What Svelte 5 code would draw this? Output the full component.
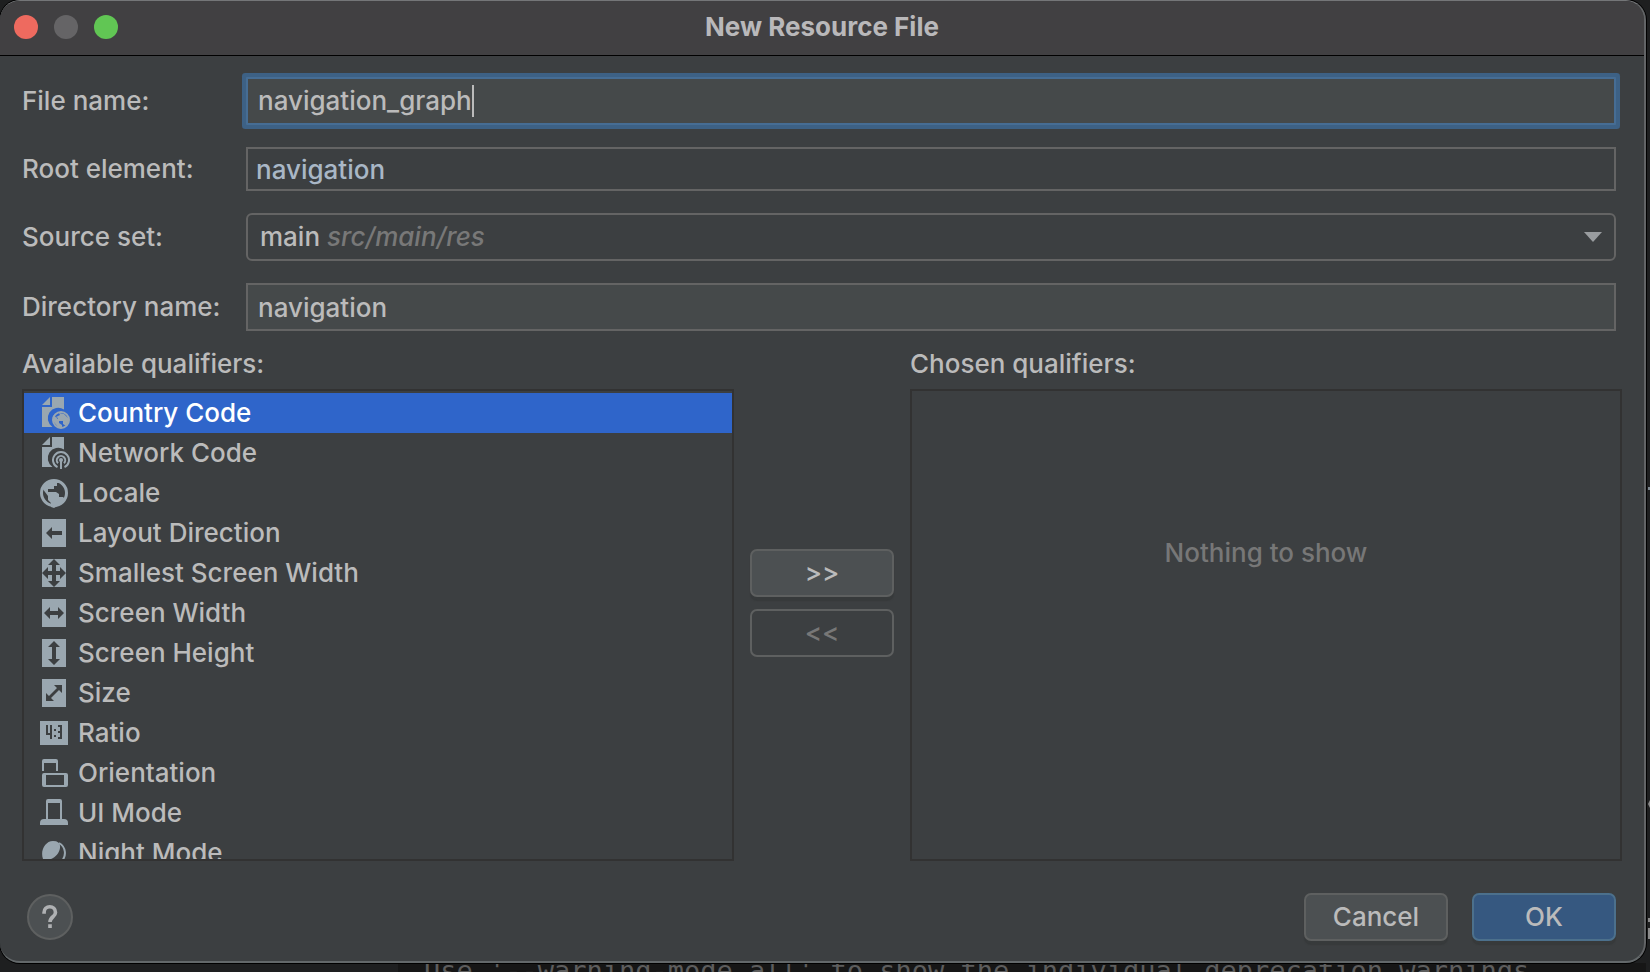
<script>
  const qualifiers = [
    ['country', 'Country Code'],
    ['network', 'Network Code'],
    ['locale', 'Locale'],
    ['direction', 'Layout Direction'],
    ['smallest', 'Smallest Screen Width'],
    ['width', 'Screen Width'],
    ['height', 'Screen Height'],
    ['size', 'Size'],
    ['ratio', 'Ratio'],
    ['orientation', 'Orientation'],
    ['uimode', 'UI Mode'],
    ['night', 'Night Mode']
  ];
  let selected = $state(0);
  let fileName = $state('navigation_graph');
  let rootElement = $state('navigation');
  let directory = $state('navigation');
</script>

{#snippet icon(kind)}
  <svg class="icon" viewBox="0 0 32 32" aria-hidden="true">
    {#if kind === 'country' || kind === 'network'}
      <path d="M12 0v8H4z M14 0h12v12.400A10.500 10.500 0 0 0 14.500 30H4V10h10z" />
    {/if}
    {#if kind === 'country'}
      <circle class="line" cx="23" cy="23" r="8" />
      <path d="M15.500 18l5.500 5v3l3 2v3l-4-1-5-6z M21 16l5 1 4 4 1 3-3 5-3-2v-3h-5v-3l-2-1 4-2z" />
    {:else if kind === 'network'}
      <path class="line" d="M19.500 30.200A8 8 0 1 1 26.500 30.200 M20 26.200A4.200 4.200 0 1 1 26 26.200" />
      <circle cx="23" cy="23" r="2" /><path d="M22 23h2v9h-2z" />
    {:else if kind === 'locale'}
      <circle class="line wide" cx="16" cy="16" r="12.500" />
      <path d="M12 3h9v3h-2v3h-3v3h-6v3h8l3 2v3h4l2 2-4 5-7 4-3-1v-4l-3-3v-4L4 11z" />
    {:else if kind === 'direction'}
      <path d="M4 2h24v28H4z" /><path class="cut" d="M8 16l6-6v4h10v4H14v4z" />
    {:else if kind === 'smallest'}
      <path d="M4 2h24v28H4z" />
      <path class="cut" d="M16 2l6 6h-4v6h4v-4l6 6-6 6v-4h-4v6h4l-6 6-6-6h4v-6h-4v4l-6-6 6-6v4h4V8h-4z" />
    {:else if kind === 'width'}
      <path d="M4 2h24v28H4z" /><path class="cut" d="M6 16l6-6v4h8v-4l6 6-6 6v-4h-8v4z" />
    {:else if kind === 'height'}
      <path d="M4 2h24v28H4z" /><path class="cut" d="M16 4l6 6h-4v12h4l-6 6-6-6h4V10h-4z" />
    {:else if kind === 'size'}
      <path d="M4 2h24v28H4z" />
      <path class="cut" d="M16 8h8v8l-3-3-8 8 3 3H8v-8l3 3 8-8z" />
    {:else if kind === 'ratio'}
      <path d="M2 4h28v24H2z" />
      <path class="cut" d="M8 8h2v8h2V8h2v14h-2v-4H8z M16 12h2v2h-2z M16 18h2v2h-2z M20 8h4v14h-4v-2h2v-4h-2v-2h2v-4h-2z" />
    {:else if kind === 'orientation'}
      <path d="M4 14V4q0-2 2-2h12q2 0 2 2v10h-2V6H6v8z" />
      <path fill-rule="evenodd" d="M6 16h22q2 0 2 2v10q0 2-2 2H6q-2 0-2-2V18q0-2 2-2zM8 18v10h18V18z" />
    {:else if kind === 'uimode'}
      <path fill-rule="evenodd" d="M8 22V4q0-2 2-2h12q2 0 2 2v18h2q4 0 4 4v2H2v-2q0-4 4-4zM10 6v16h12V6z" />
    {:else if kind === 'night'}
      <path d="M5 22C2 14 7 4 15 4q8 0 7 7c-1 8-10 14-17 11z" />
      <path class="line" d="M21 6c7 4 8 13 2 19q-7 5-14-1" />
    {/if}
  </svg>
{/snippet}

<div class="desktop">
  <main class="dialog" aria-labelledby="title">
    <header class="titlebar">
      <div class="lights">
        <button class="light close" aria-label="Close"></button>
        <button class="light minimize" aria-label="Minimize" disabled></button>
        <button class="light zoom" aria-label="Zoom"></button>
      </div>
      <h1 id="title">New Resource File</h1>
    </header>

    <form class="content" onsubmit={(e) => e.preventDefault()}>
      <div class="fields">
        <label for="file">File name:</label>
        <div class="field filled focused">
          <span class="grow"><span class="mirror" aria-hidden="true">{fileName}</span><input id="file" bind:value={fileName} /></span>
        </div>
        <label for="root">Root element:</label>
        <input id="root" class="field root" bind:value={rootElement} />
        <label for="source">Source set:</label>
        <div class="field combo">
          <select id="source"><option>main src/main/res</option></select>
          <span class="value" aria-hidden="true">main <i>src/main/res</i></span>
          <svg class="arrow" viewBox="0 0 18 10" aria-hidden="true"><path d="M0 0h18L9 10z" /></svg>
        </div>
        <label for="dir">Directory name:</label>
        <input id="dir" class="field filled" bind:value={directory} />
      </div>

      <div class="qualifiers">
        <section>
          <h2>Available qualifiers:</h2>
          <ul class="list" role="listbox" aria-label="Available qualifiers">
            {#each qualifiers as [kind, name], i}
              <li role="option" aria-selected={selected === i}>
                <button type="button" class="row" class:selected={selected === i} onclick={() => (selected = i)}>
                  {@render icon(kind)}<span>{name}</span>
                </button>
              </li>
            {/each}
          </ul>
        </section>
        <div class="transfer">
          <button type="button" class="button">&gt;&gt;</button>
          <button type="button" class="button" disabled>&lt;&lt;</button>
        </div>
        <section>
          <h2>Chosen qualifiers:</h2>
          <div class="list empty">Nothing to show</div>
        </section>
      </div>

      <footer>
        <button type="button" class="help" aria-label="Help">
          <svg viewBox="0 0 46 46" aria-hidden="true">
            <path class="hook" d="M16.500 19.500v-1.500a6 6 0 0 1 12.500 0c0 5-6 4.500-6 10.500" /><path d="M21 31h4v4h-4z" />
          </svg>
        </button>
        <div class="actions">
          <button type="button" class="button">Cancel</button>
          <button type="submit" class="button primary">OK</button>
        </div>
      </footer>
    </form>
  </main>
  <div class="console">Use '--warning-mode all' to show the individual deprecation warnings.</div>
  <svg class="edge" viewBox="0 0 2 460" aria-hidden="true">
    <path fill="#7d8790" d="M0 0h2v3H0z" />
    <path fill="#8a8a8a" d="M0 317l2-4v8z M0 431h2v4H0z M0 441h2v11H0z" />
  </svg>
</div>

<style>
  :global(body) {
    margin: 0;
    background: #1e1f20;
  }
  * {
    box-sizing: border-box;
  }
  .desktop {
    position: relative;
    height: 100vh;
    padding-right: 4px;
    display: flex;
    flex-direction: column;
    overflow: hidden;
    background: #1e1f20;
    color: #bbbbbb;
    font: 500 26px/32px Inter, "Liberation Sans", sans-serif;
  }
  button, input, select {
    font: inherit;
    color: inherit;
    margin: 0;
  }
  .dialog {
    position: relative;
    z-index: 1;
    flex: none;
    border: 1px solid #747678;
    border-width: 1px 2px 2px 0;
    border-color: #747678 #626466 #63686a;
    border-radius: 20px;
    background: #3c3f41;
    box-shadow: 0 0 0 1px #000;
    overflow: hidden;
  }
  .titlebar {
    display: grid;
    grid-template-columns: 1fr auto 1fr;
    align-items: center;
    height: 55px;
    padding: 0 14px 2px;
    background: #414042;
    border-bottom: 1px solid #000;
  }
  .lights {
    display: flex;
    gap: 16px;
  }
  .light {
    width: 24px;
    height: 24px;
    padding: 0;
    border: 0;
    border-radius: 50%;
  }
  .close { background: #ee6a5f; }
  .minimize { background: #656466; }
  .zoom { background: #61c654; }
  h1 {
    margin: 0;
    font-size: 26px;
    line-height: 32px;
    font-weight: 700;
    color: #b9b8ba;
  }
  .content {
    padding: 21px 22px 20px;
  }
  .fields {
    display: grid;
    grid-template-columns: 224px 1fr;
    align-items: center;
    row-gap: 22px;
    padding-right: 6px;
  }
  .field {
    width: 100%;
    height: 48px;
    padding: 0 10px;
    border: 2px solid #646464;
    background: transparent;
    outline: 0;
    border-radius: 0;
  }
  .filled { background: #45494a; }
  .focused {
    display: flex;
    align-items: center;
    border-color: #466d94;
    box-shadow: 0 0 0 4px #3d6185;
    border-radius: 1px;
  }
  .grow {
    display: inline-grid;
    max-width: 100%;
    border-right: 2px solid #bbbbbb;
  }
  .mirror, .grow input {
    grid-area: 1 / 1;
    white-space: pre;
  }
  .mirror { visibility: hidden; }
  .grow input {
    width: 0;
    min-width: 100%;
    padding: 0;
    border: 0;
    outline: 0;
    background: transparent;
  }
  .root {
    height: 44px;
    padding: 0 8px;
    color: #a9b7c6;
  }
  .combo {
    display: grid;
    grid-template-columns: 1fr auto;
    align-items: center;
    padding: 0 12px;
    border-radius: 6px;
  }
  .combo select {
    grid-area: 1 / 1 / 2 / 3;
    width: 100%;
    appearance: none;
    border: 0;
    outline: 0;
    background: transparent;
    color: transparent;
  }
  .value {
    grid-area: 1 / 1;
    pointer-events: none;
  }
  .value i { color: #787878; }
  .arrow {
    grid-area: 1 / 2;
    width: 18px;
    height: 10px;
    fill: #9a9da0;
    pointer-events: none;
  }
  .qualifiers {
    display: grid;
    grid-template-columns: 1fr 144px 1fr;
    column-gap: 16px;
    margin-top: 14px;
  }
  h2 {
    margin: 0;
    padding: 3px 0 9px;
    font: inherit;
  }
  .list {
    height: 472px;
    margin: 0;
    padding: 2px 0;
    border: 2px solid #323232;
    list-style: none;
    overflow: hidden;
  }
  .row {
    display: flex;
    align-items: center;
    gap: 8px;
    width: 100%;
    height: 40px;
    padding: 0 14px;
    border: 0;
    background: transparent;
    text-align: left;
  }
  .selected {
    background: #2f65ca;
    color: #fff;
  }
  .icon {
    flex: none;
    width: 32px;
    height: 32px;
    fill: #9aa7b0;
  }
  .icon .line {
    fill: none;
    stroke: #9aa7b0;
    stroke-width: 2;
  }
  .icon .wide { stroke-width: 3; }
  .icon .cut { fill: #3c3f41; }
  .transfer {
    display: flex;
    flex-direction: column;
    justify-content: center;
    gap: 12px;
  }
  .button {
    width: 144px;
    height: 48px;
    padding: 0;
    border: 2px solid #5e6060;
    border-radius: 7px;
    background: #4c5052;
    box-shadow: 0 4px 1px #373a3b;
  }
  .button:disabled {
    background: transparent;
    color: #777777;
    box-shadow: none;
  }
  .primary {
    background: #365880;
    border-color: #4c708c;
  }
  .empty {
    display: flex;
    justify-content: center;
    padding-top: 146px;
    color: #777777;
  }
  footer {
    display: flex;
    justify-content: space-between;
    align-items: center;
    margin-top: 32px;
    padding: 0 6px 0 5px;
  }
  .help {
    width: 46px;
    height: 46px;
    padding: 0;
    border: 2px solid #5e6060;
    border-radius: 50%;
    background: #4c5052;
  }
  .help svg {
    display: block;
    width: 42px;
    height: 42px;
    fill: #afb1b3;
  }
  .help .hook {
    fill: none;
    stroke: #afb1b3;
    stroke-width: 4;
  }
  .actions {
    display: flex;
    gap: 24px;
  }
  .console {
    flex: 1;
    margin-left: 398px;
    padding-left: 26px;
    background: #161616;
    color: #5d5d5d;
    font: 27px/16px "DejaVu Sans Mono", monospace;
    white-space: pre;
  }
  .edge {
    position: absolute;
    right: 0;
    top: 487px;
    width: 2px;
    height: 460px;
  }
</style>
